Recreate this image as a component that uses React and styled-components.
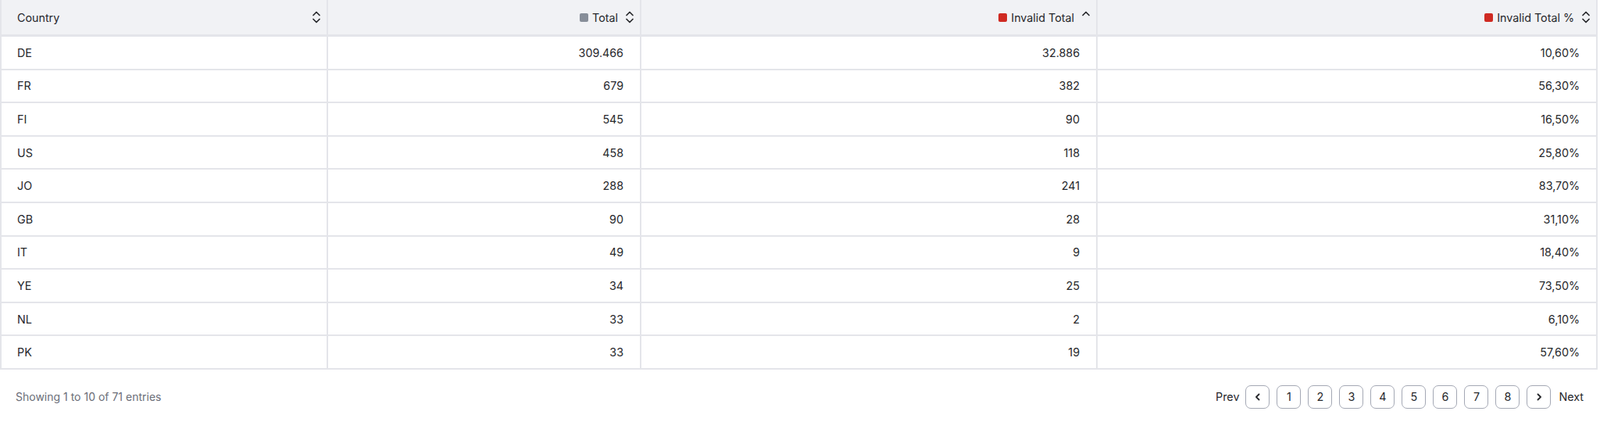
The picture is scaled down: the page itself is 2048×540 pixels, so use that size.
import React from "react";
import styled, { createGlobalStyle } from "styled-components";

const GlobalStyle = createGlobalStyle`
  body {
    margin: 0;
    background: #ffffff;
    font-family: Inter, "Noto Sans", sans-serif;
    color: #27282c;
  }
`;

const Page = styled.div`
  width: 2048px;
  height: 540px;
  display: flex;
  flex-direction: column;
  overflow: hidden;
`;

const TableWrap = styled.div`
  padding-right: 3px;
`;

const Table = styled.table`
  width: 100%;
  border-collapse: collapse;
  table-layout: fixed;
  font-size: 14.3px;
  border-left: 2px solid #e4e5ea;
  border-right: 2px solid #e4e5ea;
`;

const Th = styled.th`
  height: 44px;
  padding: 0 7px 0 20px;
  background: #f1f2f5;
  font-weight: 400;
  text-align: left;
  border-right: 2px solid #e4e5ea;
  border-bottom: 3px solid #e4e5ea;
  &:last-child {
    border-right: none;
  }
`;

const HeadInner = styled.div`
  display: flex;
  align-items: center;
  justify-content: ${(p) => (p.$right ? "flex-end" : "space-between")};
  gap: 9px;
`;

const Label = styled.span`
  display: flex;
  align-items: center;
  gap: 5px;
  white-space: nowrap;
`;

const Swatch = styled.span`
  width: 11px;
  height: 11px;
  border-radius: 2px;
  background: ${(p) => p.$color};
`;

const Td = styled.td`
  height: 40.6px;
  padding: 0 21px 0 20px;
  text-align: ${(p) => (p.$right ? "right" : "left")};
  border-right: 2px solid #e4e5ea;
  border-bottom: 2px solid #e4e5ea;
  &:last-child {
    border-right: none;
  }
`;

const Footer = styled.div`
  display: flex;
  align-items: center;
  justify-content: space-between;
  padding: 20px 21px 0 20px;
  font-size: 14px;
`;

const Info = styled.span`
  color: #6b6e78;
`;

const Pager = styled.div`
  display: flex;
  align-items: center;
  gap: 9px;
`;

const PagerText = styled.span`
  color: #27282c;
  font-size: 14.3px;
  margin: ${(p) => (p.$prev ? "0 -1px 0 0" : "0 0 0 1px")};
`;

const PageButton = styled.button`
  width: 31px;
  height: 30px;
  padding: 0;
  display: flex;
  align-items: center;
  justify-content: center;
  background: #ffffff;
  border: 1.5px solid #a4a8b4;
  border-radius: 7px;
  font-family: Inter, "Noto Sans", sans-serif;
  font-size: 14.3px;
  color: #27282c;
`;

const SortIcon = ({ up }) => (
  <svg width="12" height="18" viewBox="0 0 12 18" fill="none" stroke="#27282c" strokeWidth="1.7" strokeLinecap="round" strokeLinejoin="round">
    <path d="M2 6.5 L6 2.5 L10 6.5" />
    {!up && <path d="M2 11.5 L6 15.5 L10 11.5" />}
  </svg>
);

const Chevron = ({ dir }) => (
  <svg width="12" height="12" viewBox="0 0 12 12" fill="none" stroke="#27282c" strokeWidth="1.8" strokeLinecap="round" strokeLinejoin="round">
    {dir === "left" ? <path d="M7.5 2.5 L4 6 L7.5 9.5" /> : <path d="M4.5 2.5 L8 6 L4.5 9.5" />}
  </svg>
);

const rows = [
  ["DE", "309.466", "32.886", "10,60%"],
  ["FR", "679", "382", "56,30%"],
  ["FI", "545", "90", "16,50%"],
  ["US", "458", "118", "25,80%"],
  ["JO", "288", "241", "83,70%"],
  ["GB", "90", "28", "31,10%"],
  ["IT", "49", "9", "18,40%"],
  ["YE", "34", "25", "73,50%"],
  ["NL", "33", "2", "6,10%"],
  ["PK", "33", "19", "57,60%"],
];

export default function App() {
  return (
    <Page>
      <GlobalStyle />
      <TableWrap>
        <Table>
          <colgroup>
            <col style={{ width: 418 }} />
            <col style={{ width: 401 }} />
            <col style={{ width: 584 }} />
            <col />
          </colgroup>
          <thead>
            <tr>
              <Th>
                <HeadInner>
                  <Label>Country</Label>
                  <SortIcon />
                </HeadInner>
              </Th>
              <Th>
                <HeadInner $right>
                  <Label>
                    <Swatch $color="#878e99" />
                    Total
                  </Label>
                  <SortIcon />
                </HeadInner>
              </Th>
              <Th>
                <HeadInner $right>
                  <Label>
                    <Swatch $color="#cf2a22" />
                    Invalid Total
                  </Label>
                  <SortIcon up />
                </HeadInner>
              </Th>
              <Th>
                <HeadInner $right>
                  <Label>
                    <Swatch $color="#cf2a22" />
                    Invalid Total %
                  </Label>
                  <SortIcon />
                </HeadInner>
              </Th>
            </tr>
          </thead>
          <tbody>
            {rows.map((r) => (
              <tr key={r[0]}>
                <Td>{r[0]}</Td>
                <Td $right>{r[1]}</Td>
                <Td $right>{r[2]}</Td>
                <Td $right>{r[3]}</Td>
              </tr>
            ))}
          </tbody>
        </Table>
      </TableWrap>
      <Footer>
        <Info>Showing 1 to 10 of 71 entries</Info>
        <Pager>
          <PagerText $prev>Prev</PagerText>
          <PageButton>
            <Chevron dir="left" />
          </PageButton>
          {[1, 2, 3, 4, 5, 6, 7, 8].map((n) => (
            <PageButton key={n}>{n}</PageButton>
          ))}
          <PageButton>
            <Chevron dir="right" />
          </PageButton>
          <PagerText>Next</PagerText>
        </Pager>
      </Footer>
    </Page>
  );
}
